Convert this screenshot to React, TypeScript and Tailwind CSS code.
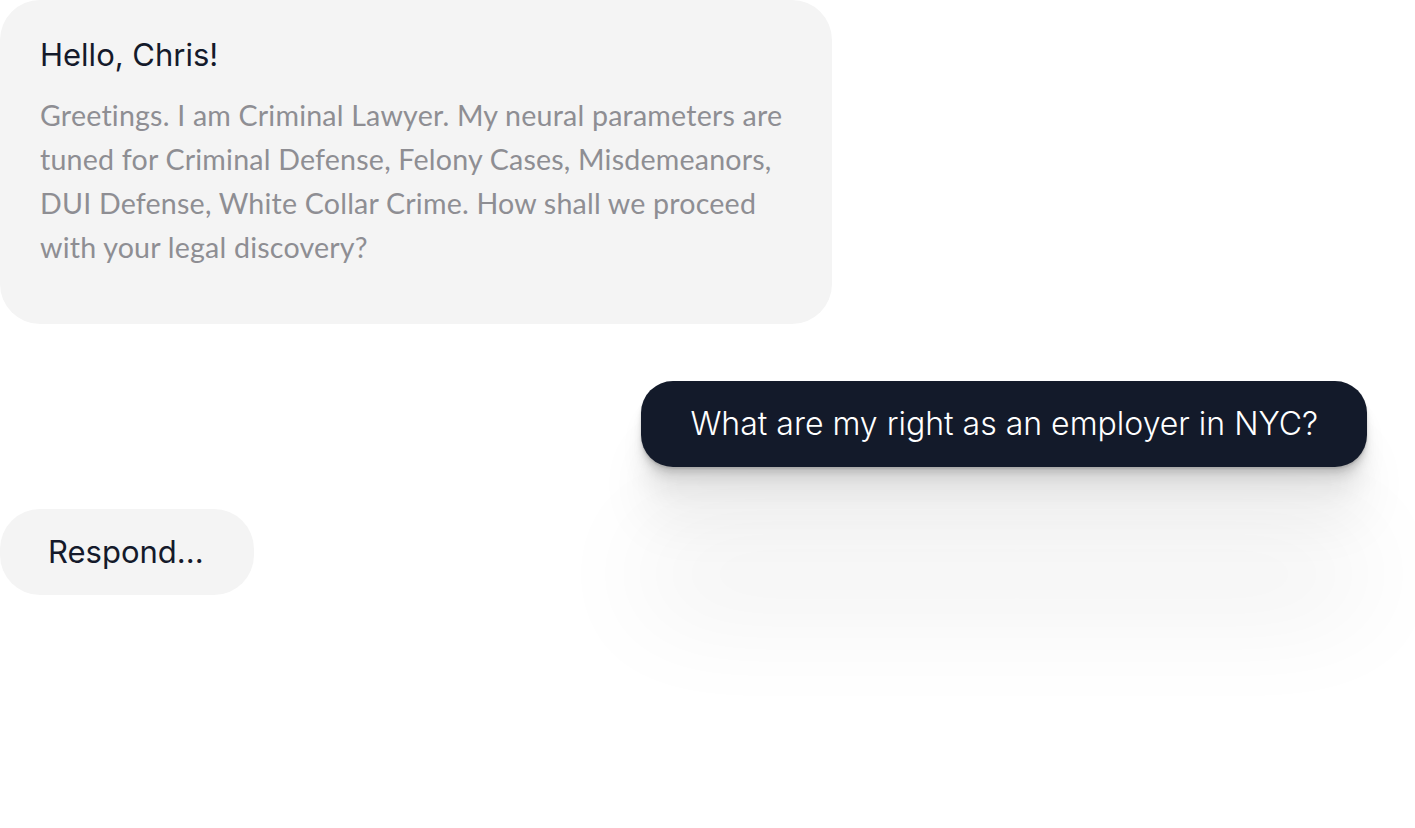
export default function App() {
  return (
    <div className="min-h-screen w-full bg-white">
      <div className="flex flex-col items-start">
        <div className="h-[324px] w-[832px] rounded-[40px] bg-[#f4f4f4] px-[40px] pt-[34px]">
          <h1 className="font-['Inter',sans-serif] text-[31px] leading-[42px] text-[#141a2b]">Hello, Chris!</h1>
          <p className="mt-[17px] whitespace-nowrap font-['Lato',sans-serif] text-[28.6px] leading-[44px] tracking-[0.2px] text-[#8e8e93]">
            Greetings. I am Criminal Lawyer. My neural parameters are
            <br />
            tuned for Criminal Defense, Felony Cases, Misdemeanors,
            <br />
            DUI Defense, White Collar Crime. How shall we proceed
            <br />
            with your legal discovery?
          </p>
        </div>

        <div className="mt-[57px] mr-[48px] flex h-[86px] items-center self-end rounded-[32px] bg-[#131a2a] px-[49px] shadow-[0_150px_110px_rgba(0,0,0,0.06),0_60px_50px_rgba(0,0,0,0.05),0_26px_22px_rgba(0,0,0,0.06),0_12px_10px_rgba(0,0,0,0.07),0_6px_5px_rgba(0,0,0,0.09),0_2px_2px_rgba(0,0,0,0.12)]">
          <span className="font-['Inter',sans-serif] text-[32px] font-light text-white">
            What are my right as an employer in NYC?
          </span>
        </div>

        <div className="mt-[42px] flex h-[86px] items-center rounded-[40px] bg-[#f4f4f4] pl-[48px] pr-[50px]">
          <span className="font-['Inter',sans-serif] text-[31px] text-[#141a2b]">Respond...</span>
        </div>
      </div>
    </div>
  )
}
